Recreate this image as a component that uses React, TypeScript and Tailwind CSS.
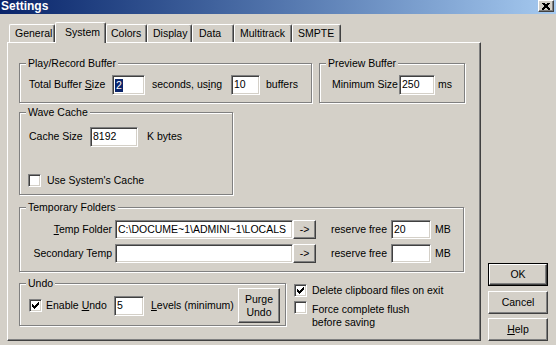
const sunken =
  'bg-white border border-t-[#808080] border-l-[#808080] border-r-white border-b-white shadow-[inset_1px_1px_0_#404040,inset_-1px_-1px_0_#d4d0c8]';
const raised =
  'bg-[#d4d0c8] border border-t-white border-l-white border-r-[#404040] border-b-[#404040] shadow-[inset_-1px_-1px_0_#808080]';

function Group({ title, className, children }: { title: string; className: string; children?: React.ReactNode }) {
  return (
    <div className={`relative shrink-0 border border-[#808080] shadow-[1px_1px_0_#fff,inset_1px_1px_0_#fff] ${className}`}>
      <span className="absolute -top-[7px] left-[6px] bg-[#d4d0c8] px-[2px] leading-[13px]">{title}</span>
      {children}
    </div>
  );
}

function Field({ w, h = 20, children }: { w: number; h?: number; children?: React.ReactNode }) {
  return (
    <div
      className={`${sunken} shrink-0 flex items-center pl-[2px] overflow-hidden whitespace-nowrap`}
      style={{ width: w, height: h }}
    >
      {children}
    </div>
  );
}

function Check({ checked }: { checked?: boolean }) {
  const px = [
    [6, 0], [5, 1], [6, 1], [0, 2], [4, 2], [5, 2], [6, 2],
    [0, 3], [1, 3], [3, 3], [4, 3], [5, 3],
    [0, 4], [1, 4], [2, 4], [3, 4], [4, 4],
    [1, 5], [2, 5], [3, 5], [2, 6],
  ];
  return (
    <div className={`${sunken} w-[13px] h-[13px] shrink-0 flex items-center justify-center`}>
      {checked && (
        <svg width="7" height="7" viewBox="0 0 7 7" shapeRendering="crispEdges">
          {px.map(([x, y]) => (
            <rect key={`${x}-${y}`} x={x} y={y} width="1" height="1" fill="#000" />
          ))}
        </svg>
      )}
    </div>
  );
}

function Tab({ label, w, pl, active }: { label: string; w: number; pl: number; active?: boolean }) {
  return (
    <div
      className={
        active
          ? 'relative z-10 -mb-px h-[21px] bg-[#d4d0c8] border-l border-t border-r border-l-white border-t-white border-r-[#404040] rounded-t-[2px] shadow-[inset_-1px_0_0_#808080] pt-[3px] leading-[13px] whitespace-nowrap'
          : 'h-[18px] border-l border-t border-r border-l-white border-t-white border-r-[#404040] rounded-t-[2px] shadow-[inset_-1px_0_0_#808080] pt-[2px] leading-[13px] whitespace-nowrap'
      }
      style={{ width: w, paddingLeft: pl }}
    >
      {label}
    </div>
  );
}

export default function App() {
  return (
    <div className="w-[556px] h-[345px] overflow-hidden bg-[#d4d0c8] font-['Liberation_Sans',Arial,sans-serif] text-[10.5px] text-black">
      {/* title bar */}
      <div className="h-[14px] flex items-start justify-between bg-gradient-to-r from-[#0a246a] to-[#a6caf0]">
        <span className="pl-[1px] -mt-[1px] text-[12px] font-bold leading-[14px] text-white">Settings</span>
        <div className={`${raised} mr-[2px] w-[16px] h-[12px] flex items-center justify-center`}>
          <svg width="8" height="7" viewBox="0 0 8 7" shapeRendering="crispEdges">
            <path d="M0.5 0 L7.5 7 M1.5 0 L7.5 6 M7.5 0 L0.5 7 M6.5 0 L0.5 6" stroke="#000" strokeWidth="1" />
          </svg>
        </div>
      </div>

      <div className="flex items-end pl-[7px] pt-[8px]">
        <div className="flex flex-col">
          <div className="flex items-end h-[20px] pl-[2px]">
            <Tab label="General" w={46} pl={5} />
            <Tab label="System" w={51} pl={9} active />
            <Tab label="Colors" w={41} pl={4} />
            <Tab label="Display" w={45} pl={5} />
            <Tab label="Data" w={42} pl={6} />
            <Tab label="Multitrack" w={58} pl={5} />
            <Tab label="SMPTE" w={49} pl={5} />
          </div>

          <div className="w-[474px] h-[299px] border border-t-white border-l-white border-r-[#404040] border-b-[#404040] shadow-[inset_-1px_-1px_0_#808080] pl-[11px] pt-[20px]">
            <div className="flex">
              <Group title="Play/Record Buffer" className="w-[293px] h-[40px] pl-[9px] pt-[11px]">
                <div className="flex items-center">
                  <span className="w-[83px] shrink-0 whitespace-nowrap">
                    Total Buffer <u>S</u>ize
                  </span>
                  <Field w={33}>
                    <span className="bg-[#0a246a] text-white leading-[13px] px-px">2</span>
                  </Field>
                  <span className="ml-[7px] w-[79px] shrink-0 whitespace-nowrap">
                    seconds, us<u>i</u>ng
                  </span>
                  <Field w={29}>10</Field>
                  <span className="ml-[6px] whitespace-nowrap">buffers</span>
                </div>
              </Group>
              <Group title="Preview Buffer" className="ml-[7px] w-[146px] h-[40px] pl-[12px] pt-[11px]">
                <div className="flex items-center">
                  <span className="w-[67px] shrink-0 whitespace-nowrap">Minimum Size</span>
                  <Field w={36}>250</Field>
                  <span className="ml-[3px]">ms</span>
                </div>
              </Group>
            </div>

            <Group title="Wave Cache" className="mt-[9px] w-[214px] h-[83px] pl-[9px] pt-[14px]">
              <div className="flex items-center">
                <span className="w-[61px] shrink-0 whitespace-nowrap">Cache Size</span>
                <Field w={48}>8192</Field>
                <span className="ml-[9px] whitespace-nowrap">K bytes</span>
              </div>
              <div className="mt-[26px] -ml-px flex items-center">
                <Check />
                <span className="ml-[6px] whitespace-nowrap">Use System's Cache</span>
              </div>
            </Group>

            <Group title="Temporary Folders" className="mt-[12px] w-[445px] h-[65px] pt-[12px]">
              {[
                { label: 'Temp Folder', path: 'C:\\DOCUME~1\\ADMINI~1\\LOCALS', mb: '20' },
                { label: 'Secondary Temp', path: '', mb: '' },
              ].map((r, i) => (
                <div key={r.label} className={`flex items-center ${i ? 'mt-[5px]' : ''}`}>
                  <span className="w-[92px] shrink-0 text-right whitespace-nowrap">
                    {i === 0 ? (
                      <>
                        <u>T</u>emp Folder
                      </>
                    ) : (
                      r.label
                    )}
                  </span>
                  <div className="ml-[3px]">
                    <Field w={178} h={19}>
                      {r.path}
                    </Field>
                  </div>
                  <div className={`${raised} w-[23px] h-[19px] shrink-0 flex items-center justify-center leading-none`}>
                    -&gt;
                  </div>
                  <span className="ml-[15px] w-[60px] shrink-0 whitespace-nowrap">reserve free</span>
                  <Field w={40} h={19}>
                    {r.mb}
                  </Field>
                  <span className="ml-[4px]">MB</span>
                </div>
              ))}
            </Group>

            <div className="mt-[11px] flex items-start">
              <Group title="Undo" className="w-[267px] h-[43px] pl-[9px] pt-[4px]">
                <div className="flex items-center">
                  <Check checked />
                  <span className="ml-[4px] w-[68px] shrink-0 whitespace-nowrap">
                    Enable <u>U</u>ndo
                  </span>
                  <Field w={30}>5</Field>
                  <span className="ml-[7px] w-[87px] shrink-0 whitespace-nowrap">
                    <u>L</u>evels (minimum)
                  </span>
                  <div className={`${raised} w-[42px] h-[35px] shrink-0 flex flex-col items-center justify-center leading-[13px]`}>
                    <span>Purge</span>
                    <span>Undo</span>
                  </div>
                </div>
              </Group>
              <div className="ml-[8px] flex flex-col">
                <div className="flex items-center">
                  <Check checked />
                  <span className="ml-[5px] whitespace-nowrap">Delete clipboard files on exit</span>
                </div>
                <div className="mt-[2px] flex items-start">
                  <Check />
                  <span className="ml-[5px] mt-[2px] leading-[13px]">
                    Force complete flush
                    <br />
                    before saving
                  </span>
                </div>
              </div>
            </div>
          </div>
        </div>

        <div className="ml-[7px] flex flex-col">
          <div className="w-[60px] h-[23px] border border-black">
            <div className={`${raised} w-full h-full flex items-center justify-center`}>OK</div>
          </div>
          <div className={`${raised} mt-[5px] w-[60px] h-[23px] flex items-center justify-center`}>Cancel</div>
          <div className={`${raised} mt-[4px] w-[60px] h-[23px] flex items-center justify-center`}>
            <span>
              <u>H</u>elp
            </span>
          </div>
        </div>
      </div>
    </div>
  );
}
